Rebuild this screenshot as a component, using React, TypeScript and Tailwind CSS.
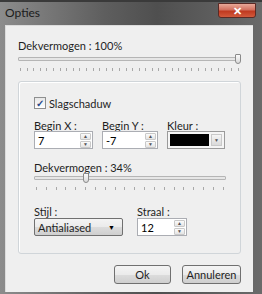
import { FC } from 'react';

// tick marks under a trackbar
const Ticks: FC<{ count: number }> = ({ count }) => (
  <div className="flex justify-between px-[2px]">
    {Array.from({ length: count }).map((_, i) => (
      <span key={i} className="w-px h-[3px] bg-[#a8a8a8]" />
    ))}
  </div>
);

const Slider: FC<{ pos: number; ticks: number }> = ({ pos, ticks }) => (
  <div className="flex flex-col">
    <div className="relative h-[10px]">
      <div className="absolute left-0 right-0 top-[3px] h-[4px] rounded-[1px] border border-[#b5b5b5] bg-[#e6e6e6]" />
      <div
        className="absolute top-0 w-[6px] h-[10px] rounded-b-[3px] rounded-t-[1px] border border-[#8a8a8a] bg-[linear-gradient(#fafafa,#d9d9d9)]"
        style={{ left: `calc(${pos}% - 3px)` }}
      />
    </div>
    <div className="mt-[4px]">
      <Ticks count={ticks} />
    </div>
  </div>
);

const SpinArrows: FC = () => (
  <div className="flex flex-col gap-px pr-px py-px">
    <div className="w-[11px] h-[7px] flex items-center justify-center rounded-[1px] border border-[#c9c9c9] bg-[linear-gradient(#fbfbfb,#e4e4e4)] text-[5px] leading-none text-[#555]">▲</div>
    <div className="w-[11px] h-[7px] flex items-center justify-center rounded-[1px] border border-[#c9c9c9] bg-[linear-gradient(#fbfbfb,#e4e4e4)] text-[5px] leading-none text-[#555]">▼</div>
  </div>
);

const SpinBox: FC<{ value: string; width: string }> = ({ value, width }) => (
  <div className={`${width} h-[18px] flex items-center justify-between border border-[#abadb3] bg-white`}>
    <span className="pl-[3px] text-[11px] text-black leading-none">{value}</span>
    <SpinArrows />
  </div>
);

const Field: FC<{ label: string; children: React.ReactNode }> = ({ label, children }) => (
  <div className="flex flex-col">
    <span className="h-[11px] leading-[11px] text-[11px] text-[#1e1e1e]">{label}</span>
    <div>{children}</div>
  </div>
);

const WinButton: FC<{ label: string; width: string }> = ({ label, width }) => (
  <button className={`${width} h-[19px] rounded-[3px] border border-[#707070] bg-[linear-gradient(#f4f4f4_0%,#ebebeb_50%,#dcdcdc_51%,#cfcfcf_100%)] text-[11px] text-[#1e1e1e] leading-none`}>
    {label}
  </button>
);

export default function App() {
  return (
    <div
      className="w-[262px] h-[294px] flex flex-col bg-[linear-gradient(90deg,#8c8c8c_0%,#5e5e5e_40%,#4f4f4f_60%,#6a6a6a_100%)] overflow-hidden"
      style={{ fontFamily: 'Lato, "Open Sans", sans-serif' }}
    >
      {/* title bar */}
      <div className="h-[25px] flex items-start justify-between pl-[5px] pr-[6px] border-t-2 border-[#3a3a3a]">
        <span className="mt-[5px] text-[12px] text-[#1b1b1b] leading-none">Opties</span>
        <div className="mt-px w-[38px] h-[15px] flex items-center justify-center rounded-b-[3px] border border-[#5a2a25] bg-[linear-gradient(#e8a898_0%,#d2705e_45%,#c0391f_55%,#d25a3c_100%)] text-white text-[11px] font-bold leading-none">
          ✕
        </div>
      </div>

      {/* client area */}
      <div className="flex-1 ml-[5px] mr-[9px] mb-[2px] bg-[#efefef] border-t border-l border-[#dcdcdc] flex flex-col px-[12px] pt-[14px]">
        <span className="h-[12px] leading-[12px] text-[11px] text-[#1e1e1e]">Dekvermogen : 100%</span>
        <div className="mt-[2px]">
          <Slider pos={98.5} ticks={34} />
        </div>

        {/* group box */}
        <div className="mt-[10px] h-[173px] rounded-[3px] border border-[#d0d5d9] shadow-[inset_1px_1px_0_#ffffff] flex flex-col pl-[15px] pr-[15px] pt-[14px]">
          <label className="flex items-center gap-[3px] h-[14px]">
            <span className="w-[12px] h-[12px] flex items-center justify-center border border-[#8e8f8f] bg-[linear-gradient(#e6e6e6,#ffffff)] text-[10px] leading-none text-[#2b4a8a] font-bold">
              ✓
            </span>
            <span className="text-[11px] text-[#1e1e1e] leading-none">Slagschaduw</span>
          </label>

          <div className="mt-[10px] flex gap-[9px]">
            <Field label="Begin X :">
              <SpinBox value="7" width="w-[59px]" />
            </Field>
            <Field label="Begin Y :">
              <SpinBox value="-7" width="w-[56px]" />
            </Field>
            <Field label="Kleur :">
              <div className="w-[58px] h-[18px] flex items-center border border-[#9a9a9a] bg-[#f5f5f5] p-[2px] gap-[2px]">
                <div className="flex-1 h-full bg-black" />
                <div className="w-[11px] h-full flex items-center justify-center bg-[linear-gradient(#f5f5f5,#dadada)] border border-[#c9c9c9] text-[5px] text-[#555] leading-none">▼</div>
              </div>
            </Field>
          </div>

          <span className="mt-[13px] h-[11px] leading-[11px] text-[11px] text-[#1e1e1e]">Dekvermogen : 34%</span>
          <div className="w-[192px]">
            <Slider pos={27} ticks={20} />
          </div>

          <div className="mt-[16px] flex gap-[14px]">
            <Field label="Stijl :">
              <div className="mt-px w-[89px] h-[18px] flex items-center justify-between rounded-[2px] border border-[#707070] bg-[linear-gradient(#f4f4f4_0%,#ebebeb_50%,#dcdcdc_51%,#cfcfcf_100%)] px-[3px]">
                <span className="text-[11px] text-[#1e1e1e] leading-none">Antialiased</span>
                <span className="text-[7px] leading-none text-black pr-[4px]">▼</span>
              </div>
            </Field>
            <Field label="Straal :">
              <div className="mt-px">
                <SpinBox value="12" width="w-[50px]" />
              </div>
            </Field>
          </div>
        </div>

        <div className="mt-[11px] flex justify-end gap-[11px] pr-0">
          <WinButton label="Ok" width="w-[57px]" />
          <WinButton label="Annuleren" width="w-[59px]" />
        </div>
      </div>
    </div>
  );
}
